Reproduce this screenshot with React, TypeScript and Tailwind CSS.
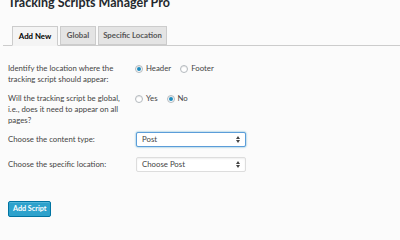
function Radio({ checked, label }: { checked?: boolean; label: string }) {
  return (
    <label className="flex items-center gap-[3px] mr-[9px]">
      <span className="w-[8px] h-[8px] rounded-full border border-[#b4b9be] bg-white flex items-center justify-center shadow-[inset_0_1px_1px_rgba(0,0,0,0.1)]">
        {checked && <span className="w-[4px] h-[4px] rounded-full bg-[#1e8cbe]" />}
      </span>
      <span>{label}</span>
    </label>
  )
}

function Select({ value, focus }: { value: string; focus?: boolean }) {
  return (
    <div
      className={
        focus
          ? "w-[110px] h-[15px] flex items-center justify-between px-[5px] bg-white rounded-[2px] border border-[#5b9dd9] shadow-[0_0_2px_rgba(30,140,190,0.8)]"
          : "w-[110px] h-[15px] flex items-center justify-between px-[5px] bg-white rounded-[2px] border border-[#dddddd] shadow-[inset_0_1px_2px_rgba(0,0,0,0.07)]"
      }
    >
      <span>{value}</span>
      <svg width="4" height="7" viewBox="0 0 4 7">
        <path d="M0 3 L2 0 L4 3 Z M0 4 L2 7 L4 4 Z" fill="#444" />
      </svg>
    </div>
  )
}

export default function App() {
  return (
    <div className="w-[400px] h-[240px] overflow-hidden bg-[#fbfbfb] text-[#444] font-['Lato',sans-serif] text-[7.8px] leading-[11px]">
      <h2 className="pl-[8px] -mt-[5px] text-[12.5px] leading-[16px] font-bold text-[#23282d] whitespace-nowrap">Tracking Scripts Manager Pro</h2>
      <div className="ml-[3px] mt-[15px] pl-[9px] flex gap-[2px] border-b border-[#cccccc] h-[20px]">
        <div className="w-[46px] h-[20px] -mb-px border border-[#cccccc] border-b-[#f4f4f4] bg-[#f4f4f4] flex items-center justify-center font-bold text-[#000] whitespace-nowrap">Add New</div>
        <div className="w-[36px] h-[19px] border border-[#cccccc] bg-[#e4e4e4] flex items-center justify-center font-bold text-[#555] whitespace-nowrap">Global</div>
        <div className="w-[69px] h-[19px] border border-[#cccccc] bg-[#e4e4e4] flex items-center justify-center font-bold text-[#555] whitespace-nowrap">Specific Location</div>
      </div>

      <div className="pl-[8px] mt-[17px] flex flex-col">
        <div className="flex">
          <div className="w-[127px] whitespace-nowrap">Identify the location where the<br />tracking script should appear:</div>
          <div className="flex items-start">
            <Radio checked label="Header" />
            <Radio label="Footer" />
          </div>
        </div>
        <div className="flex mt-[8px]">
          <div className="w-[127px] whitespace-nowrap">Will the tracking script be global,<br />i.e., does it need to appear on all<br />pages?</div>
          <div className="flex items-start">
            <Radio label="Yes" />
            <Radio checked label="No" />
          </div>
        </div>
        <div className="flex items-center mt-[6px]">
          <div className="w-[128px] whitespace-nowrap">Choose the content type:</div>
          <Select value="Post" focus />
        </div>
        <div className="flex items-center mt-[10px]">
          <div className="w-[128px] whitespace-nowrap">Choose the specific location:</div>
          <Select value="Choose Post" />
        </div>
        <div className="mt-[29px]">
          <button className="h-[16px] px-[4px] rounded-[2px] bg-[#2ea2cc] border border-[#0074a2] text-white font-bold text-[7.2px] leading-[14px] shadow-[inset_0_1px_0_rgba(120,200,230,0.5)] whitespace-nowrap">Add Script</button>
        </div>
      </div>
    </div>
  )
}
